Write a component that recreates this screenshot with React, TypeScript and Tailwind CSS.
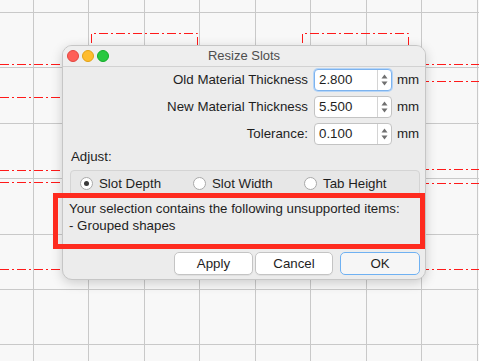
import React from 'react'

const FONT = { fontFamily: '"Liberation Sans", Arial, sans-serif' }

// canvas grid and the red dash-dot outlines behind the dialog
function Canvas() {
  const xs = [33, 88, 144, 199, 255, 310, 366, 421, 477]
  const ys = [12, 67, 123, 178, 234, 289, 344]
  const dash = '9 3 2 3'
  return (
    <svg className="absolute inset-0" width={479} height={361}>
      {xs.map(x => (
        <line key={'x' + x} x1={x + 0.5} y1={0} x2={x + 0.5} y2={361} stroke="#c9c9c9" strokeWidth={1} />
      ))}
      {ys.map(y => (
        <line key={'y' + y} x1={0} y1={y + 0.5} x2={479} y2={y + 0.5} stroke="#c9c9c9" strokeWidth={1} />
      ))}
      <g stroke="#ff1a1a" strokeWidth={1} fill="none" strokeDasharray={dash}>
        <path d="M91.5 60 V33.5 H197.5 V60" />
        <path d="M302.5 60 V33.5 H408.5 V60" />
        <line x1={0} y1={64.5} x2={70} y2={64.5} />
        <line x1={0} y1={97.5} x2={70} y2={97.5} />
        <line x1={0} y1={170.5} x2={70} y2={170.5} />
        <line x1={0} y1={182.5} x2={70} y2={182.5} />
        <line x1={0} y1={269.5} x2={70} y2={269.5} />
        <line x1={420} y1={64.5} x2={479} y2={64.5} />
        <line x1={420} y1={81.5} x2={479} y2={81.5} />
        <line x1={420} y1={169.5} x2={479} y2={169.5} />
        <line x1={420} y1={183.5} x2={479} y2={183.5} />
        <line x1={420} y1={269.5} x2={479} y2={269.5} />
      </g>
    </svg>
  )
}

function Stepper() {
  return (
    <div className="w-[14px] h-full border-l border-[#d4d4d4] flex flex-col items-center justify-center gap-[2px]">
      <svg width="7" height="5" viewBox="0 0 7 5">
        <path d="M3.5 0.5 L6.5 4.5 H0.5 Z" fill="#707070" />
      </svg>
      <svg width="7" height="5" viewBox="0 0 7 5">
        <path d="M0.5 0.5 H6.5 L3.5 4.5 Z" fill="#707070" />
      </svg>
    </div>
  )
}

function SpinRow({ label, value, focused }: { label: string; value: string; focused?: boolean }) {
  return (
    <div className="flex items-center justify-end h-[22px]">
      <span className="text-[13.3px] text-[#1e1e1e]">{label}</span>
      <div
        className={
          focused
            ? 'ml-[6px] w-[78px] h-[22px] flex bg-white rounded-[4px] border border-[#7db3ee] shadow-[0_0_0_1px_#b6d5f7]'
            : 'ml-[6px] w-[78px] h-[22px] flex bg-white rounded-[4px] border border-[#c3c3c3]'
        }
      >
        <span className="flex-1 pl-[4px] text-[13.3px] leading-[20px] text-[#1e1e1e]">{value}</span>
        <Stepper />
      </div>
      <span className="ml-[5px] w-[22px] text-[13.3px] text-[#1e1e1e]">mm</span>
    </div>
  )
}

function Radio({ label, checked, width }: { label: string; checked?: boolean; width: string }) {
  return (
    <div className={'flex items-center gap-[6px] ' + width}>
      <span className="w-[13px] h-[13px] rounded-full bg-white border border-[#a9a9a9] flex items-center justify-center">
        {checked && <span className="w-[5px] h-[5px] rounded-full bg-[#3a3a3a]" />}
      </span>
      <span className="text-[13.3px] text-[#1e1e1e]">{label}</span>
    </div>
  )
}

export default function App() {
  return (
    <div className="relative w-[479px] h-[361px] overflow-hidden bg-[#f8f8f8]" style={FONT}>
      <Canvas />

      {/* Resize Slots dialog */}
      <div className="absolute left-[62px] top-[45px] w-[364px] h-[235px] rounded-[10px] bg-[#ececec] border border-[#c6c6c6] shadow-[0_3px_12px_rgba(0,0,0,0.18)] overflow-hidden flex flex-col">
        {/* Title bar */}
        <div className="h-[21px] border-b border-[#d2d2d2] bg-[#eeeeee] grid grid-cols-[1fr_auto_1fr] items-center">
          <div className="flex items-center gap-[3px] pl-[4px]">
            <span className="w-[12px] h-[12px] rounded-full bg-[#fe5f57] border border-[#e2463f]" />
            <span className="w-[12px] h-[12px] rounded-full bg-[#febc2e] border border-[#e1a116]" />
            <span className="w-[12px] h-[12px] rounded-full bg-[#28c840] border border-[#12ac28]" />
          </div>
          <span className="text-[13px] text-[#4d4d4d]">Resize Slots</span>
          <div />
        </div>

        {/* Thickness rows */}
        <div className="mt-[2px] pr-[6px] flex flex-col gap-[5px]">
          <SpinRow label="Old Material Thickness" value="2.800" focused />
          <SpinRow label="New Material Thickness" value="5.500" />
          <SpinRow label="Tolerance:" value="0.100" />
        </div>

        <div className="mt-[4px] pl-[8px] text-[13.3px] leading-[16px] text-[#1e1e1e]">Adjust:</div>

        {/* Adjust group */}
        <div className="mt-[5px] ml-[7px] mr-[5px] h-[27px] rounded-[4px] border border-[#d4d4d4] bg-[#e7e7e7] flex items-center pl-[9px]">
          <Radio label="Slot Depth" checked width="w-[113px]" />
          <Radio label="Slot Width" width="w-[111px]" />
          <Radio label="Tab Height" width="flex-1" />
        </div>

        {/* Message */}
        <div className="mt-[3px] pl-[6px] text-[13.3px] leading-[17px] text-[#1e1e1e]">
          <div>Your selection contains the following unsupported items:</div>
          <div>- Grouped shapes</div>
        </div>

        {/* Buttons */}
        <div className="mt-auto mb-[4px] pr-[5px] flex justify-end">
          <button className="w-[79px] h-[23px] rounded-[5px] bg-white border border-[#c4c4c4] text-[13.3px] text-[#1e1e1e] shadow-[0_1px_0_rgba(0,0,0,0.05)]">
            Apply
          </button>
          <button className="ml-[2px] w-[78px] h-[23px] rounded-[5px] bg-white border border-[#c4c4c4] text-[13.3px] text-[#1e1e1e] shadow-[0_1px_0_rgba(0,0,0,0.05)]">
            Cancel
          </button>
          <button className="ml-[7px] w-[80px] h-[23px] rounded-[5px] bg-[#f6f6f6] border border-[#6fb1f2] text-[13.3px] text-[#1e1e1e]">
            OK
          </button>
        </div>
      </div>

      {/* Annotation outline */}
      <div className="absolute left-[53px] top-[193px] w-[372px] h-[56px] border-[5px] border-[#fe2b1f]" />
    </div>
  )
}
